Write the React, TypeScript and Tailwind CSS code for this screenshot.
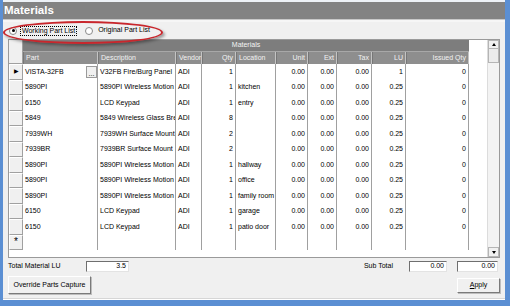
import React from "react";

type Row = {
  part: string;
  desc: string;
  loc: string;
  qty: string;
  lu: string;
};

const rows: Row[] = [
  { part: "VISTA-32FB", desc: "V32FB Fire/Burg Panel", qty: "1", loc: "", lu: "1" },
  { part: "5890PI", desc: "5890PI Wireless Motion", qty: "1", loc: "kitchen", lu: "0.25" },
  { part: "6150", desc: "LCD Keypad", qty: "1", loc: "entry", lu: "0.25" },
  { part: "5849", desc: "5849 Wireless Glass Bre", qty: "8", loc: "", lu: "0.25" },
  { part: "7939WH", desc: "7939WH Surface Mount", qty: "2", loc: "", lu: "0.25" },
  { part: "7939BR", desc: "7939BR Surface Mount", qty: "2", loc: "", lu: "0.25" },
  { part: "5890PI", desc: "5890PI Wireless Motion", qty: "1", loc: "hallway", lu: "0.25" },
  { part: "5890PI", desc: "5890PI Wireless Motion", qty: "1", loc: "office", lu: "0.25" },
  { part: "5890PI", desc: "5890PI Wireless Motion", qty: "1", loc: "family room", lu: "0.25" },
  { part: "6150", desc: "LCD Keypad", qty: "1", loc: "garage", lu: "0.25" },
  { part: "6150", desc: "LCD Keypad", qty: "1", loc: "patio door", lu: "0.25" },
];

// column widths in px, same order as the headers
const cols = [
  { label: "Part", w: "w-[75px]", right: false },
  { label: "Description", w: "w-[78px]", right: false },
  { label: "Vendor", w: "w-[26px]", right: false },
  { label: "Qty", w: "w-[34px]", right: true },
  { label: "Location", w: "w-[40px]", right: false },
  { label: "Unit", w: "w-[32px]", right: true },
  { label: "Ext", w: "w-[29px]", right: true },
  { label: "Tax", w: "w-[35px]", right: true },
  { label: "LU", w: "w-[34px]", right: true },
  { label: "Issued Qty", w: "w-[63px]", right: true },
];

function Cell({ w, right, children }: { w: string; right?: boolean; children?: React.ReactNode }) {
  return (
    <div
      className={`${w} shrink-0 h-full border-r border-[#a0a0a0] overflow-hidden whitespace-nowrap px-[2px] flex items-center ${
        right ? "justify-end" : ""
      }`}
    >
      {children}
    </div>
  );
}

function Radio({ checked }: { checked?: boolean }) {
  return (
    <div className="w-[8px] h-[8px] rounded-full border border-[#8a8a8a] bg-white flex items-center justify-center">
      {checked && <div className="w-[3px] h-[3px] rounded-full bg-black" />}
    </div>
  );
}

function Sunken({ w, value }: { w: string; value: string }) {
  return (
    <div
      className={`${w} h-[11px] bg-white border-t border-l border-[#6f6f6f] border-b border-r border-b-[#e3e3e3] border-r-[#e3e3e3] flex items-center justify-end pr-[2px]`}
    >
      {value}
    </div>
  );
}

export default function App() {
  return (
    <div
      className="w-[510px] h-[306px] bg-[#5b8fd3] pl-[3px] pr-[5px] pb-[6px] text-[7px] text-black relative"
      style={{ fontFamily: '"Liberation Sans", Arial, sans-serif' }}
    >
      <div className="h-full bg-[#f0f0f0] flex flex-col border-t-2 border-[#eef2f7]">
        {/* TITLE */}
        <div className="h-[17px] bg-[#838383] flex items-center px-[1px] text-white font-bold text-[11.5px]">
          Materials
        </div>
        <div className="h-[3px] border-t border-[#c9c9c9] bg-[#f6f6f6]" />

        {/* RADIO ROW */}
        <div className="h-[17px] flex items-center pl-[6px] gap-[3px]">
          <Radio checked />
          <span className="border border-dotted border-black px-[1px] leading-[8px]">Working Part List</span>
          <div className="w-[2px]" />
          <Radio />
          <span className="pl-[2px]">Original Part List</span>
        </div>

        {/* GRID */}
        <div className="mx-[5px] h-[219px] bg-white border border-[#9a9a9a] flex">
          <div className="flex-1 flex flex-col">
            <div className="flex h-[24px]">
              <div className="w-[14px] shrink-0 bg-[#f0f0f0] border-r border-b border-[#a0a0a0]" />
              <div className="flex flex-col">
                <div className="h-[12px] w-[446px] bg-[#7d7d7d] text-[#f4f4f4] flex items-center justify-center border-b border-[#a8a8a8]">
                  Materials
                </div>
                <div className="h-[12px] flex bg-[#8e8e8e] text-[#f2f2f2]">
                  {cols.map((c) => (
                    <div
                      key={c.label}
                      className={`${c.w} shrink-0 h-full border-r border-[#c4c4c4] border-l border-l-[#777] flex items-center px-[2px] ${
                        c.right ? "justify-end" : ""
                      }`}
                    >
                      {c.label}
                    </div>
                  ))}
                </div>
              </div>
            </div>

            {rows.map((r, i) => (
              <div key={i} className="h-[15.5px] flex">
                <div className="w-[14px] shrink-0 bg-[#f0f0f0] border-t border-l border-white border-r border-b border-r-[#a0a0a0] border-b-[#a0a0a0] flex items-center justify-center">
                  {i === 0 && <span className="text-[6px]">&#9654;</span>}
                </div>
                <Cell w={cols[0].w}>
                  <span className="flex-1">{r.part}</span>
                  {i === 0 && (
                    <span className="w-[11px] h-[12px] bg-[#f0f0f0] border border-[#9a9a9a] flex items-end justify-center leading-[7px] -mr-[2px]">
                      ...
                    </span>
                  )}
                </Cell>
                <Cell w={cols[1].w}>{r.desc}</Cell>
                <Cell w={cols[2].w}>ADI</Cell>
                <Cell w={cols[3].w} right>{r.qty}</Cell>
                <Cell w={cols[4].w}>{r.loc}</Cell>
                <Cell w={cols[5].w} right>0.00</Cell>
                <Cell w={cols[6].w} right>0.00</Cell>
                <Cell w={cols[7].w} right>0.00</Cell>
                <Cell w={cols[8].w} right>{r.lu}</Cell>
                <Cell w={cols[9].w} right>0</Cell>
              </div>
            ))}
            {/* new row */}
            <div className="h-[15.5px] flex">
              <div className="w-[14px] shrink-0 bg-[#f0f0f0] border-t border-l border-white border-r border-b border-r-[#a0a0a0] border-b-[#a0a0a0] flex items-center justify-center text-[10px] leading-none">
                *
              </div>
              {cols.map((c) => (
                <Cell key={c.label} w={c.w} />
              ))}
            </div>
          </div>

          {/* SCROLLBAR */}
          <div className="w-[12px] shrink-0 bg-[#f3f3f3] border-l border-[#dcdcdc] flex flex-col">
            <div className="h-[9px] bg-[#f0f0f0] border border-[#b5b5b5] flex items-center justify-center">
              <div className="w-0 h-0 border-l-[2.5px] border-r-[2.5px] border-b-[3px] border-l-transparent border-r-transparent border-b-black" />
            </div>
            <div className="h-[14px] bg-[#ececec] border border-[#b5b5b5] border-t-0" />
            <div className="flex-1" />
            <div className="h-[10px] bg-[#f0f0f0] border border-[#b5b5b5] flex items-center justify-center">
              <div className="w-0 h-0 border-l-[2.5px] border-r-[2.5px] border-t-[3px] border-l-transparent border-r-transparent border-t-black" />
            </div>
          </div>
        </div>

        {/* TOTALS */}
        <div className="mt-[3px] h-[11px] flex items-center px-[5px]">
          <span className="w-[78px]">Total Material LU</span>
          <Sunken w="w-[43px]" value="3.5" />
          <div className="flex-1" />
          <span className="mr-[16px]">Sub Total</span>
          <Sunken w="w-[38px]" value="0.00" />
          <div className="w-[10px]" />
          <Sunken w="w-[41px]" value="0.00" />
          <div className="w-[2px]" />
        </div>

        {/* BUTTONS */}
        <div className="mt-[4px] flex items-start px-[5px] justify-between">
          <button className="w-[83px] h-[18px] bg-[#f0f0f0] border border-t-white border-l-white border-b-[#7a7a7a] border-r-[#7a7a7a] shadow-[1px_1px_0_#bdbdbd]">
            Override Parts Capture
          </button>
          <button className="mt-[2px] w-[43px] h-[15px] bg-[#f0f0f0] border border-t-white border-l-white border-b-[#7a7a7a] border-r-[#7a7a7a] shadow-[1px_1px_0_#bdbdbd]">
            <span className="underline">A</span>pply
          </button>
        </div>
        <div className="flex-1" />
        <div className="h-[2px] bg-white border-t border-[#d6d6d6]" />
      </div>

      {/* red highlight ring over the radio row */}
      <div className="absolute left-[3px] top-[21px] w-[160px] h-[23px] rounded-[50%] border-2 border-[#c8262c] shadow-[2px_2px_3px_rgba(0,0,0,0.35)]" />
    </div>
  );
}
